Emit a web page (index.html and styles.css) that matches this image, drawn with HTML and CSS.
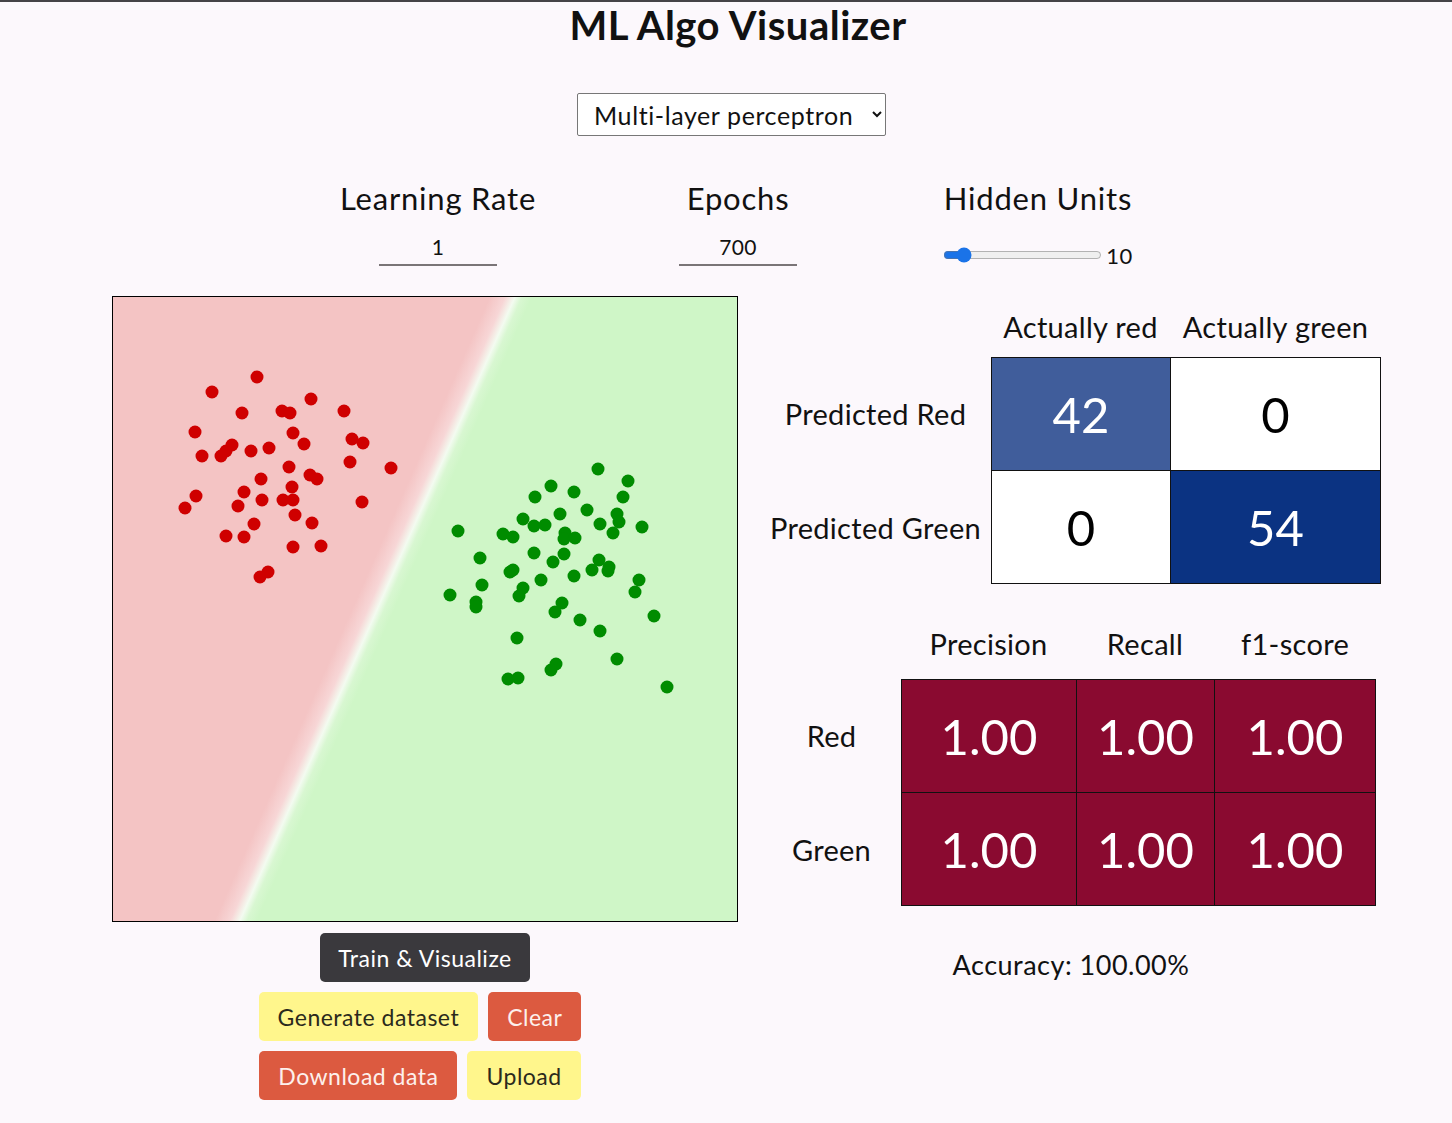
FILE: index.html
```html
<!DOCTYPE html>
<html lang="en">
<head>
<meta charset="utf-8">
<title>ML Algo Visualizer</title>
<link rel="stylesheet" href="styles.css">
</head>
<body>
<header class="top">
  <h1 class="title">ML Algo Visualizer</h1>
  <div class="algo-row">
    <select class="algo-select">
      <option>Multi-layer perceptron</option>
    </select>
  </div>
  <div class="params">
    <div class="param">
      <div class="param-label">Learning Rate</div>
      <div class="param-control"><input class="num-input" type="text" value="1"></div>
    </div>
    <div class="param">
      <div class="param-label">Epochs</div>
      <div class="param-control"><input class="num-input" type="text" value="700"></div>
    </div>
    <div class="param">
      <div class="param-label">Hidden Units</div>
      <div class="param-control slider-control">
        <input class="range" type="range" min="1" max="100" value="10">
        <span class="range-value">10</span>
      </div>
    </div>
  </div>
</header>

<main class="main">
  <section class="left-col">
    <div class="canvas">
      <svg class="points" width="624" height="624" viewBox="0 0 624 624">
        <g fill="#cf0000">
          <circle cx="144" cy="80" r="6.5"/><circle cx="99" cy="95" r="6.5"/><circle cx="129" cy="116" r="6.5"/>
          <circle cx="169" cy="114" r="6.5"/><circle cx="177" cy="116" r="6.5"/><circle cx="198" cy="102" r="6.5"/>
          <circle cx="231" cy="114" r="6.5"/><circle cx="82" cy="135" r="6.5"/><circle cx="180" cy="136" r="6.5"/>
          <circle cx="239" cy="142" r="6.5"/><circle cx="250" cy="146" r="6.5"/><circle cx="89" cy="159" r="6.5"/>
          <circle cx="108" cy="159" r="6.5"/><circle cx="113" cy="154" r="6.5"/><circle cx="119" cy="148" r="6.5"/>
          <circle cx="138" cy="154" r="6.5"/><circle cx="156" cy="151" r="6.5"/><circle cx="191" cy="147" r="6.5"/>
          <circle cx="176" cy="170" r="6.5"/><circle cx="237" cy="165" r="6.5"/><circle cx="278" cy="171" r="6.5"/>
          <circle cx="197" cy="178" r="6.5"/><circle cx="204" cy="182" r="6.5"/><circle cx="148" cy="182" r="6.5"/>
          <circle cx="179" cy="190" r="6.5"/><circle cx="83" cy="199" r="6.5"/><circle cx="72" cy="211" r="6.5"/>
          <circle cx="131" cy="195" r="6.5"/><circle cx="125" cy="209" r="6.5"/><circle cx="149" cy="203" r="6.5"/>
          <circle cx="170" cy="203" r="6.5"/><circle cx="180" cy="203" r="6.5"/><circle cx="249" cy="205" r="6.5"/>
          <circle cx="182" cy="218" r="6.5"/><circle cx="141" cy="227" r="6.5"/><circle cx="199" cy="226" r="6.5"/>
          <circle cx="113" cy="239" r="6.5"/><circle cx="131" cy="240" r="6.5"/><circle cx="180" cy="250" r="6.5"/>
          <circle cx="208" cy="249" r="6.5"/><circle cx="147" cy="280" r="6.5"/><circle cx="155" cy="275" r="6.5"/>
        </g>
        <g fill="#008c00">
          <circle cx="485" cy="172" r="6.5"/><circle cx="515" cy="184" r="6.5"/><circle cx="438" cy="189" r="6.5"/>
          <circle cx="461" cy="195" r="6.5"/><circle cx="422" cy="200" r="6.5"/><circle cx="510" cy="200" r="6.5"/>
          <circle cx="474" cy="213" r="6.5"/><circle cx="447" cy="217" r="6.5"/><circle cx="504" cy="217" r="6.5"/>
          <circle cx="506" cy="225" r="6.5"/><circle cx="410" cy="222" r="6.5"/><circle cx="421" cy="229" r="6.5"/>
          <circle cx="432" cy="228" r="6.5"/><circle cx="487" cy="227" r="6.5"/><circle cx="529" cy="230" r="6.5"/>
          <circle cx="345" cy="234" r="6.5"/><circle cx="390" cy="237" r="6.5"/><circle cx="400" cy="240" r="6.5"/>
          <circle cx="452" cy="236" r="6.5"/><circle cx="451" cy="242" r="6.5"/><circle cx="462" cy="241" r="6.5"/>
          <circle cx="500" cy="236" r="6.5"/><circle cx="421" cy="256" r="6.5"/><circle cx="451" cy="257" r="6.5"/>
          <circle cx="367" cy="261" r="6.5"/><circle cx="440" cy="265" r="6.5"/><circle cx="486" cy="263" r="6.5"/>
          <circle cx="479" cy="273" r="6.5"/><circle cx="496" cy="270" r="6.5"/><circle cx="495" cy="274" r="6.5"/>
          <circle cx="397" cy="275" r="6.5"/><circle cx="400" cy="273" r="6.5"/><circle cx="428" cy="283" r="6.5"/>
          <circle cx="461" cy="279" r="6.5"/><circle cx="526" cy="283" r="6.5"/><circle cx="522" cy="295" r="6.5"/>
          <circle cx="369" cy="288" r="6.5"/><circle cx="337" cy="298" r="6.5"/><circle cx="363" cy="305" r="6.5"/>
          <circle cx="363" cy="310" r="6.5"/><circle cx="410" cy="291" r="6.5"/><circle cx="406" cy="299" r="6.5"/>
          <circle cx="449" cy="306" r="6.5"/><circle cx="442" cy="315" r="6.5"/><circle cx="467" cy="323" r="6.5"/>
          <circle cx="541" cy="319" r="6.5"/><circle cx="487" cy="334" r="6.5"/><circle cx="404" cy="341" r="6.5"/>
          <circle cx="504" cy="362" r="6.5"/><circle cx="443" cy="367" r="6.5"/><circle cx="438" cy="373" r="6.5"/>
          <circle cx="395" cy="382" r="6.5"/><circle cx="405" cy="381" r="6.5"/><circle cx="554" cy="390" r="6.5"/>
        </g>
      </svg>
    </div>
    <div class="actions">
      <div class="btn-row"><button class="btn btn-dark">Train &amp; Visualize</button></div>
      <div class="btn-row shifted">
        <button class="btn btn-yellow">Generate dataset</button>
        <button class="btn btn-red">Clear</button>
      </div>
      <div class="btn-row shifted">
        <button class="btn btn-red">Download data</button>
        <button class="btn btn-yellow">Upload</button>
      </div>
    </div>
  </section>

  <section class="right-col">
    <div class="confusion">
      <div class="head"></div>
      <div class="head">Actually red</div>
      <div class="head">Actually green</div>

      <div class="row-label">Predicted Red</div>
      <div class="cell c-mid b-t b-l">42</div>
      <div class="cell c-white b-t b-l b-r">0</div>

      <div class="row-label">Predicted Green</div>
      <div class="cell c-white b-t b-l b-b">0</div>
      <div class="cell c-dark b-t b-l b-r b-b">54</div>
    </div>

    <div class="report">
      <div class="head"></div>
      <div class="head">Precision</div>
      <div class="head">Recall</div>
      <div class="head">f1-score</div>

      <div class="row-label">Red</div>
      <div class="cell r-cell b-t b-l">1.00</div>
      <div class="cell r-cell b-t b-l">1.00</div>
      <div class="cell r-cell b-t b-l b-r">1.00</div>

      <div class="row-label">Green</div>
      <div class="cell r-cell b-t b-l b-b">1.00</div>
      <div class="cell r-cell b-t b-l b-b">1.00</div>
      <div class="cell r-cell b-t b-l b-r b-b">1.00</div>
    </div>

    <div class="accuracy">Accuracy: 100.00%</div>
  </section>
</main>
</body>
</html>
```

FILE: styles.css
```css
* {
  box-sizing: border-box;
}

html {
  background: #fcf8fc;
}

body {
  margin: 0;
  border-top: 2px solid #454347;
  background: #fcf8fc;
  color: #111;
  font-family: "Lato", "Noto Sans", sans-serif;
  min-height: 1121px;
}

/* ---------- header ---------- */
.top {
  padding-left: 24px;
}

.title {
  margin: 0;
  height: 50px;
  font-size: 40px;
  line-height: 46px;
  font-weight: 700;
  letter-spacing: 0.5px;
  text-align: center;
  color: #111;
}

.algo-row {
  display: flex;
  justify-content: center;
  margin-top: 41px;
  padding-right: 13px;
}

.algo-select {
  width: 309px;
  height: 43px;
  padding: 0 10px 0 12px;
  font-family: inherit;
  font-size: 25px;
  letter-spacing: 0.6px;
  color: #111;
  background: #fff;
  border: 1px solid #777;
  border-radius: 2px;
}

.params {
  display: grid;
  grid-template-columns: repeat(3, 300px);
  justify-content: center;
  margin-top: 42px;
}

.param {
  display: flex;
  flex-direction: column;
  align-items: center;
}

.param-label {
  font-size: 31px;
  letter-spacing: 0.8px;
  line-height: 40px;
  height: 40px;
}

.param-control {
  margin-top: 12px;
  height: 42px;
  display: flex;
  align-items: center;
  justify-content: center;
}

.num-input {
  width: 118px;
  height: 33px;
  border: 0;
  border-bottom: 2px solid #7a7577;
  background: transparent;
  text-align: center;
  font-family: inherit;
  font-size: 21px;
  letter-spacing: 0.3px;
  color: #111;
  padding: 0 0 3px;
  margin-top: -4px;
}

.slider-control {
  gap: 4px;
}

.range {
  width: 159px;
  margin: 8px 0 0;
  accent-color: #1a73e8;
}

.range-value {
  font-size: 22px;
  letter-spacing: 0.5px;
  margin-top: 8px;
}

/* ---------- main ---------- */
.main {
  display: flex;
  gap: 22px;
  padding-left: 112px;
  margin-top: 24px;
}

.left-col {
  width: 626px;
  flex: none;
  display: flex;
  flex-direction: column;
}

.canvas {
  width: 626px;
  height: 626px;
  border: 1px solid #000;
  background: linear-gradient(113.8deg,
    #f4c4c4 0%,
    #f4c4c4 41.9%,
    #f7d6d6 43.6%,
    #f3fbf0 44.7%,
    #d8f7d1 45.5%,
    #cff6c7 46.6%,
    #cff6c7 100%);
}

.points {
  display: block;
}

.actions {
  display: flex;
  flex-direction: column;
  gap: 10px;
  margin-top: 11px;
}

.btn-row {
  display: flex;
  justify-content: center;
  gap: 10px;
}

.btn-row.shifted {
  padding-right: 10px;
}

.btn {
  height: 49px;
  padding: 0 19px;
  border: 0;
  border-radius: 5px;
  font-family: inherit;
  font-size: 23px;
  letter-spacing: 0.5px;
}

.btn-dark {
  background: #3a393d;
  color: #fff;
  padding: 0 18px;
}

.btn-yellow {
  background: #fff68c;
  color: #2b2a1c;
}

.btn-red {
  background: #dc5a40;
  color: #fdf0ec;
}

/* ---------- right ---------- */
.right-col {
  width: 622px;
  flex: none;
  display: flex;
  flex-direction: column;
}

.confusion {
  display: grid;
  grid-template-columns: 231px 179px 211px;
  grid-template-rows: 61px 113px 114px;
}

.report {
  display: grid;
  grid-template-columns: 139px 175px 138px 162px;
  grid-template-rows: 72px 113px 114px;
  margin-top: 23px;
  margin-left: 2px;
}

.head,
.row-label {
  display: flex;
  align-items: center;
  justify-content: center;
  font-size: 29px;
  letter-spacing: 0.3px;
  white-space: nowrap;
}

.cell {
  display: flex;
  align-items: center;
  justify-content: center;
  font-size: 49px;
  border: 0 solid #111;
}

.b-t { border-top-width: 1px; }
.b-l { border-left-width: 1px; }
.b-r { border-right-width: 1px; }
.b-b { border-bottom-width: 1px; }

.c-mid {
  background: #405d9b;
  color: #fff;
}

.c-dark {
  background: #0b3382;
  color: #fff;
}

.c-white {
  background: #fff;
  color: #000;
}

.r-cell {
  background: #8a0a30;
  color: #fff;
}

.accuracy {
  margin-top: 42px;
  text-align: center;
  font-size: 27px;
  letter-spacing: 0.5px;
  line-height: 34px;
}
```
